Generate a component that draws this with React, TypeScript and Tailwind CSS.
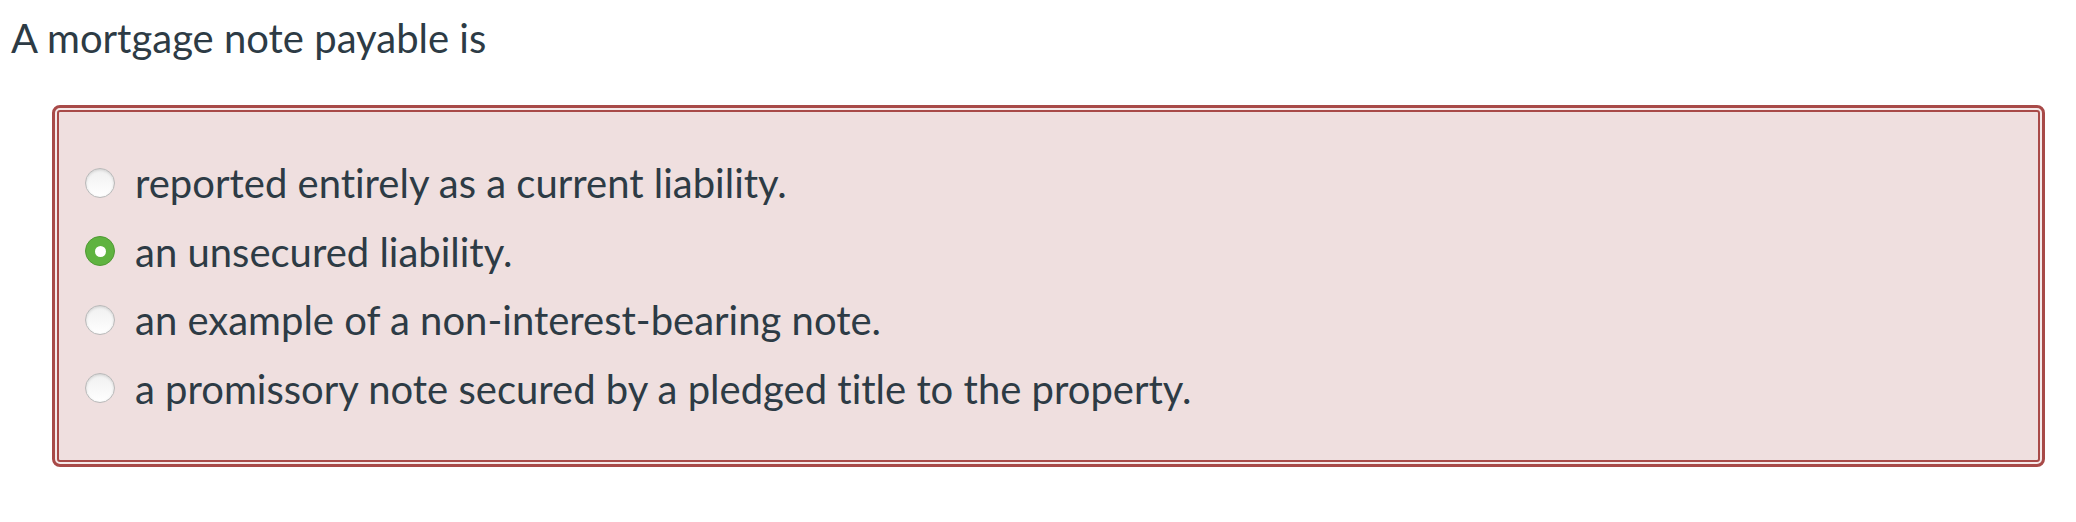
const options = [
  { label: "reported entirely as a current liability.", checked: false },
  { label: "an unsecured liability.", checked: true },
  { label: "an example of a non-interest-bearing note.", checked: false },
  { label: "a promissory note secured by a pledged title to the property.", checked: false },
];

function Radio({ checked }: { checked: boolean }) {
  if (checked) {
    return (
      <span className="flex h-[30px] w-[30px] shrink-0 items-center justify-center rounded-full border border-[#4f9a34] bg-[#5fb340]">
        <span className="h-[11px] w-[11px] rounded-full bg-white" />
      </span>
    );
  }
  return (
    <span className="h-[30px] w-[30px] shrink-0 rounded-full border border-[#b9b9b9] bg-gradient-to-b from-[#f0f0f0] to-white shadow-[inset_0_1px_3px_rgba(0,0,0,0.15)]" />
  );
}

export default function App() {
  return (
    <div className="min-h-[522px] w-full bg-white pt-[14px] font-['Lato','Liberation_Sans',sans-serif] text-[#2d3b45] [font-variant-ligatures:none]">
      <h1 className="pl-[11px] text-[40px] font-normal leading-[1.2]">A mortgage note payable is</h1>

      <div className="ml-[52px] mr-[31px] mt-[43px] rounded-[8px] border-[3px] border-[#a84a48] bg-[#f5e9e9] p-[2px]">
        <div className="rounded-[3px] border-2 border-[#a84a48] bg-[#efdfdf] pb-[37px] pl-[26px] pt-[37px]">
          {options.map((o) => (
            <label key={o.label} className="flex h-[68.5px] items-center gap-[20px]">
              <span className="-mt-[1px] flex">
                <Radio checked={o.checked} />
              </span>
              <span className="text-[40px] leading-[1.2]">{o.label}</span>
            </label>
          ))}
        </div>
      </div>
    </div>
  );
}
